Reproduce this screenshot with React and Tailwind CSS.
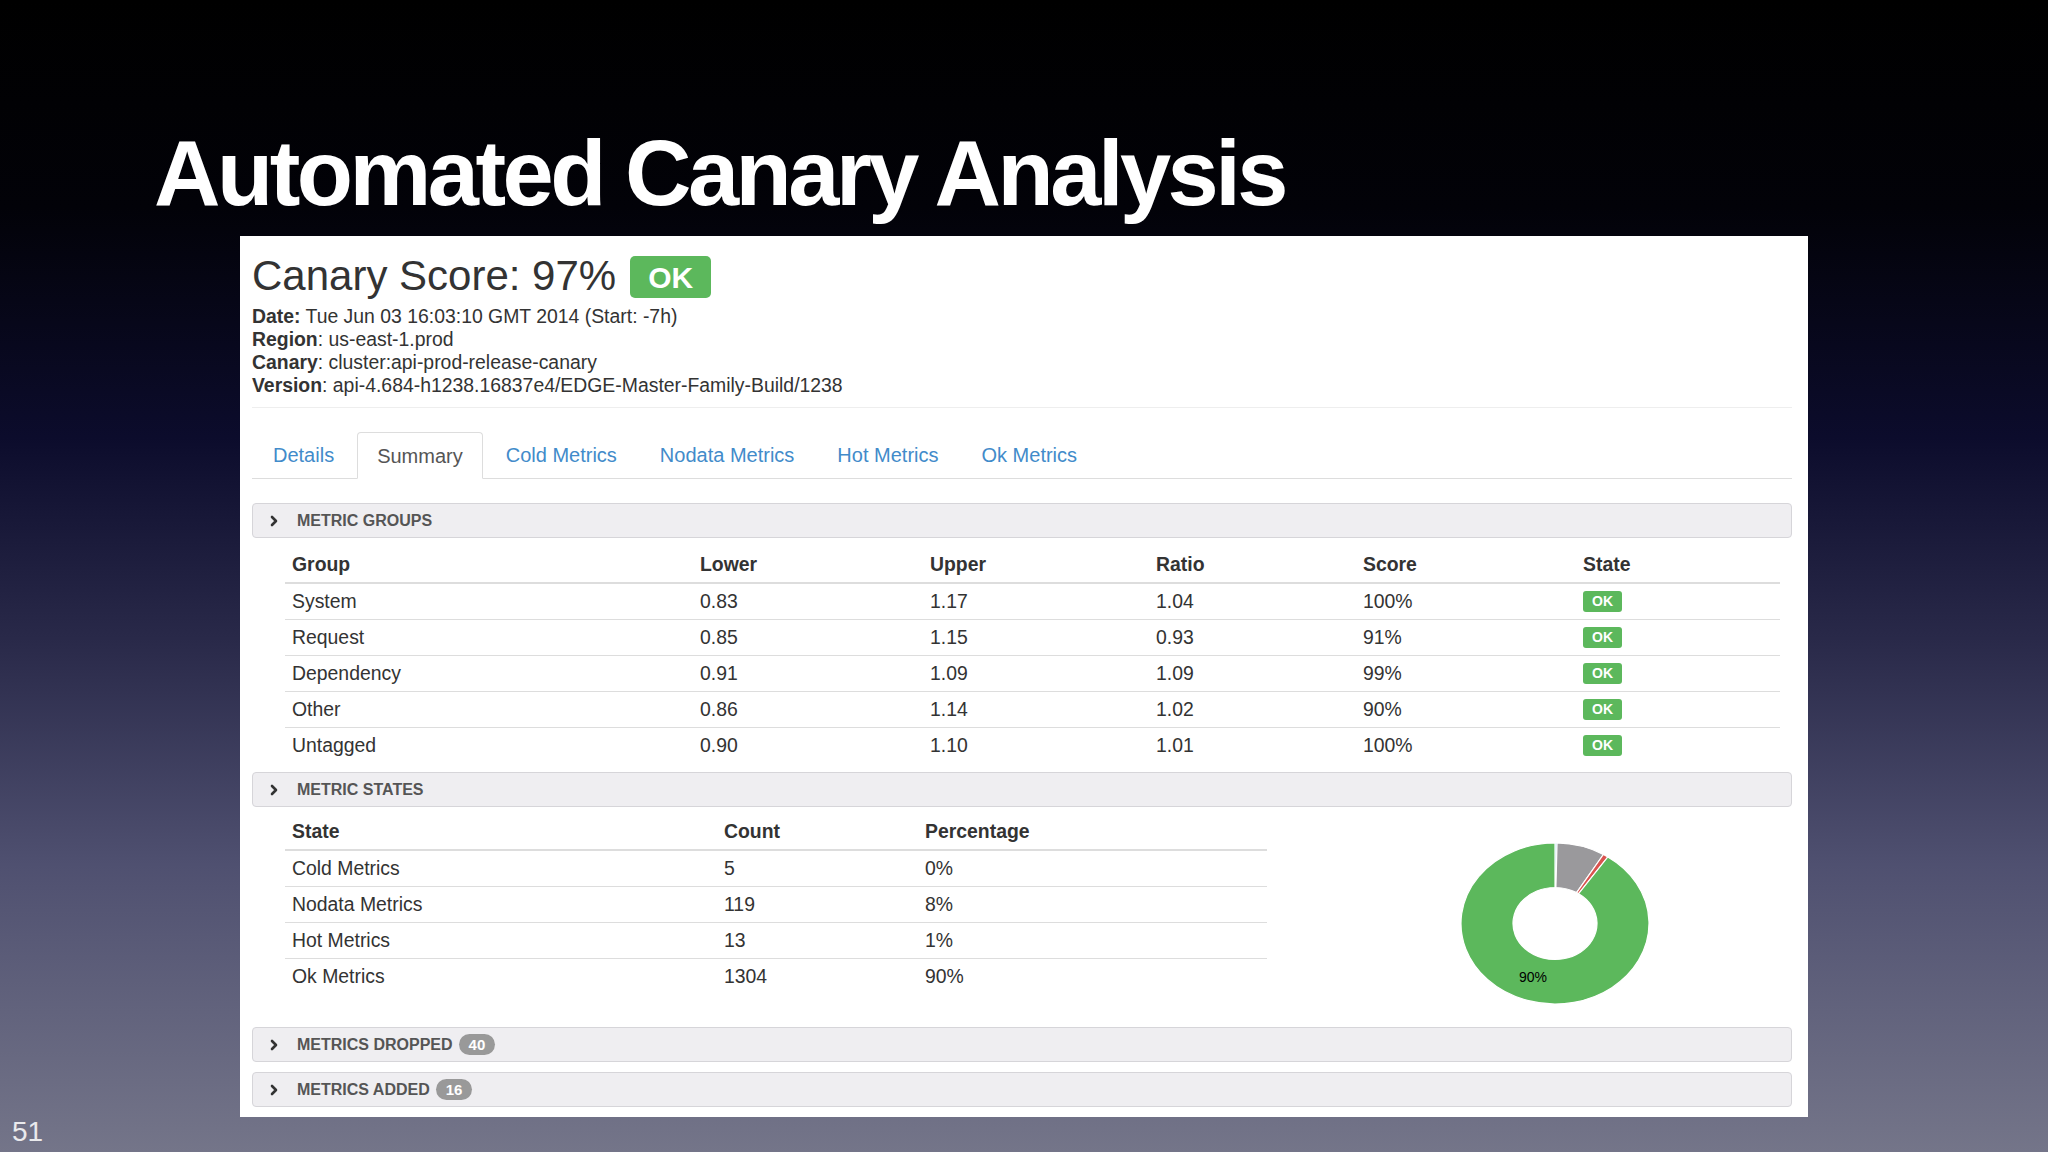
import React from 'react';

const GROUPS = [
  { name: 'System', lower: '0.83', upper: '1.17', ratio: '1.04', score: '100%' },
  { name: 'Request', lower: '0.85', upper: '1.15', ratio: '0.93', score: '91%' },
  { name: 'Dependency', lower: '0.91', upper: '1.09', ratio: '1.09', score: '99%' },
  { name: 'Other', lower: '0.86', upper: '1.14', ratio: '1.02', score: '90%' },
  { name: 'Untagged', lower: '0.90', upper: '1.10', ratio: '1.01', score: '100%' },
];

const STATES = [
  { name: 'Cold Metrics', count: 5, pct: '0%', color: '#5bc0de' },
  { name: 'Nodata Metrics', count: 119, pct: '8%', color: '#9a999c' },
  { name: 'Hot Metrics', count: 13, pct: '1%', color: '#d9534f' },
  { name: 'Ok Metrics', count: 1304, pct: '90%', color: '#5cb85c' },
];

const TABS = ['Details', 'Summary', 'Cold Metrics', 'Nodata Metrics', 'Hot Metrics', 'Ok Metrics'];

function Chevron() {
  return (
    <svg width="10" height="12" viewBox="0 0 10 12" className="shrink-0">
      <path d="M3 2 L7 6 L3 10" fill="none" stroke="#333" strokeWidth="2.6" strokeLinecap="round" strokeLinejoin="round" />
    </svg>
  );
}

function SectionBar({ title, count, className = '' }) {
  return (
    <div className={`flex items-center h-[35px] rounded-[4px] border border-[#d6d5d9] bg-[#efeef1] pl-[16px] ${className}`}>
      <Chevron />
      <span className="ml-[18px] text-[16px] font-bold text-[#555] uppercase">{title}</span>
      {count != null && (
        <span className="ml-[6px] h-[21px] px-[10px] rounded-full bg-[#999] text-white text-[15px] font-bold leading-[21px]">
          {count}
        </span>
      )}
    </div>
  );
}

function OkBadge() {
  return (
    <span className="inline-block h-[21px] px-[9px] rounded-[3px] bg-[#5cb85c] text-white text-[14px] font-bold leading-[21px]">
      OK
    </span>
  );
}

function arc(a0, a1, r0, r1) {
  const p = (a, r) => [r * Math.sin((a * Math.PI) / 180), -r * Math.cos((a * Math.PI) / 180)];
  const large = a1 - a0 > 180 ? 1 : 0;
  const [x0, y0] = p(a0, r1);
  const [x1, y1] = p(a1, r1);
  const [x2, y2] = p(a1, r0);
  const [x3, y3] = p(a0, r0);
  return `M${x0} ${y0} A${r1} ${r1} 0 ${large} 1 ${x1} ${y1} L${x2} ${y2} A${r0} ${r0} 0 ${large} 0 ${x3} ${y3} Z`;
}

function Donut() {
  const total = STATES.reduce((s, x) => s + x.count, 0);
  let a = 0;
  const slices = STATES.map((s) => {
    const a0 = a;
    a += (s.count / total) * 360;
    return { ...s, d: arc(a0, a, 44.7, 100) };
  });
  return (
    <div className="relative w-[188px] h-[161px]">
      <svg width="188" height="161" viewBox="-100 -100 200 200" preserveAspectRatio="none">
        {slices.map((s) => (
          <path key={s.name} d={s.d} fill={s.color} stroke="#fff" strokeWidth="1.2" vectorEffect="non-scaling-stroke" />
        ))}
      </svg>
      <span className="absolute left-[58px] top-[124px] text-[14px] text-black">90%</span>
    </div>
  );
}

export default function App() {
  return (
    <div className="relative w-[2048px] h-[1152px] overflow-hidden font-['Liberation_Sans',Arial,sans-serif] bg-[linear-gradient(to_bottom,#000000_0%,#020208_18%,#0c0c2c_38%,#2a2a4a_56%,#4f5070_75%,#747589_100%)]">
      {/* Slide title */}
      <h1 className="pt-[127px] pl-[154px] text-[92px] leading-none font-bold tracking-[-3.5px] text-white">
        Automated Canary Analysis
      </h1>

      {/* Screenshot panel */}
      <div className="mt-[17px] ml-[240px] w-[1568px] bg-white pl-[12px] pr-[16px] pt-[20px] pb-[10px] text-[#333]">
        <div className="flex items-center h-[42px]">
          <h2 className="text-[42px] leading-none -mt-[3px]">Canary Score: 97%</h2>
          <span className="ml-[14px] h-[42px] px-[18px] rounded-[5px] bg-[#5cb85c] text-white text-[30px] font-bold flex items-center">
            OK
          </span>
        </div>

        <div className="mt-[7px] text-[19.4px] leading-[23px]">
          <div><b>Date:</b> Tue Jun 03 16:03:10 GMT 2014 (Start: -7h)</div>
          <div><b>Region</b>: us-east-1.prod</div>
          <div><b>Canary</b>: cluster:api-prod-release-canary</div>
          <div><b>Version</b>: api-4.684-h1238.16837e4/EDGE-Master-Family-Build/1238</div>
        </div>

        <div className="mt-[10px] border-t border-[#eeeeee]" />

        {/* Tabs */}
        <div className="mt-[24px] flex h-[47px] border-b border-[#ddd] text-[20px] pl-[1px]">
          {TABS.map((t) =>
            t === 'Summary' ? (
              <div key={t} className="-mb-px mr-[3px] flex items-center px-[19px] rounded-t-[4px] border border-[#ddd] border-b-white bg-white text-[#555]">
                {t}
              </div>
            ) : (
              <div key={t} className="mr-[3px] flex items-center px-[20px] text-[#428bca]">
                {t}
              </div>
            )
          )}
        </div>

        {/* Metric groups */}
        <SectionBar title="Metric Groups" className="mt-[24px]" />
        <div className="mt-[9px] ml-[33px] mr-[12px] text-[19.4px]">
          <div className="grid grid-cols-[408px_230px_226px_207px_220px_1fr] h-[37px] items-center border-b-2 border-[#ddd] font-bold">
            {['Group', 'Lower', 'Upper', 'Ratio', 'Score', 'State'].map((h) => (
              <div key={h} className="pl-[7px]">{h}</div>
            ))}
          </div>
          {GROUPS.map((g, i) => (
            <div key={g.name} className={`grid grid-cols-[408px_230px_226px_207px_220px_1fr] h-[35px] items-center box-content ${i ? 'border-t border-[#ddd]' : ''}`}>
              <div className="pl-[7px]">{g.name}</div>
              <div className="pl-[7px]">{g.lower}</div>
              <div className="pl-[7px]">{g.upper}</div>
              <div className="pl-[7px]">{g.ratio}</div>
              <div className="pl-[7px]">{g.score}</div>
              <div className="pl-[7px] flex items-center"><OkBadge /></div>
            </div>
          ))}
        </div>

        {/* Metric states */}
        <SectionBar title="Metric States" className="mt-[9px]" />
        <div className="mt-[7px] flex">
          <div className="ml-[33px] w-[982px] text-[19.4px]">
            <div className="grid grid-cols-[432px_201px_1fr] h-[37px] items-center border-b-2 border-[#ddd] font-bold">
              {['State', 'Count', 'Percentage'].map((h) => (
                <div key={h} className="pl-[7px]">{h}</div>
              ))}
            </div>
            {STATES.map((s, i) => (
              <div key={s.name} className={`grid grid-cols-[432px_201px_1fr] h-[35px] items-center box-content ${i ? 'border-t border-[#ddd]' : ''}`}>
                <div className="pl-[7px]">{s.name}</div>
                <div className="pl-[7px]">{s.count}</div>
                <div className="pl-[7px]">{s.pct}</div>
              </div>
            ))}
          </div>
          <div className="ml-[194px] mt-[29px]">
            <Donut />
          </div>
        </div>

        <SectionBar title="Metrics Dropped" count={40} className="mt-[23px]" />
        <SectionBar title="Metrics Added" count={16} className="mt-[10px]" />
      </div>

      <div className="absolute left-[12px] top-[1118px] text-[28px] leading-none text-white/85">51</div>
    </div>
  );
}
